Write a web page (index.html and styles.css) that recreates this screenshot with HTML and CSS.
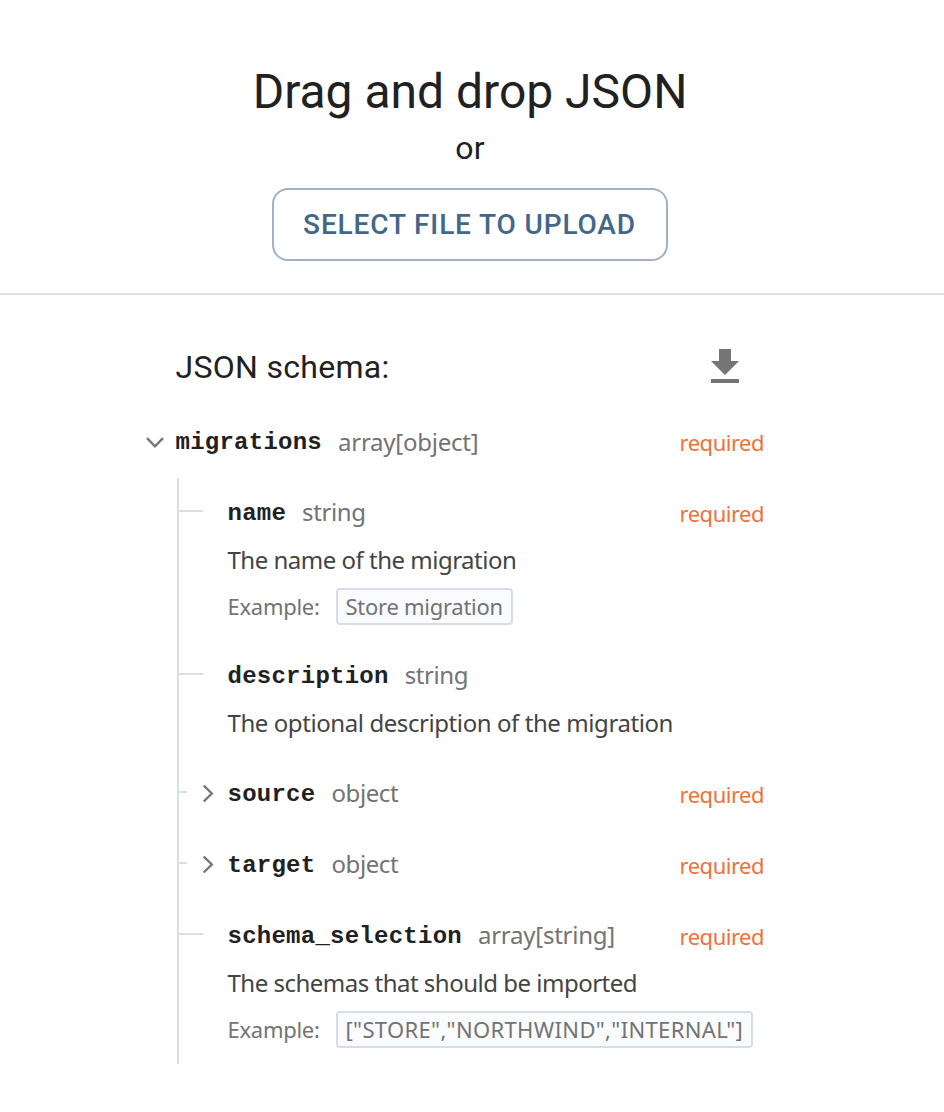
FILE: index.html
```
<!DOCTYPE html>
<html lang="en">
<head>
<meta charset="utf-8">
<title>JSON upload</title>
<link rel="stylesheet" href="styles.css">
</head>
<body>
<section class="upload">
  <h1 class="title">Drag and drop JSON</h1>
  <p class="or">or</p>
  <button class="select">SELECT FILE TO UPLOAD</button>
</section>
<main class="schema">
  <header class="schema-head">
    <h2 class="schema-title">JSON schema:</h2>
    <svg class="download" width="28" height="34" viewBox="0 0 28 34"><path d="M28 12h-8V0H8v12H0l14 14zM0 30v4h28v-4z"/></svg>
  </header>
  <div class="row root">
    <svg class="chevron" width="20" height="20" viewBox="0 0 20 20"><path d="M2 6.200 10 14.300l8-8.100"/></svg>
    <span class="key">migrations</span><span class="type array">array[object]</span><span class="required">required</span>
  </div>
  <div class="tree">
    <div class="field">
      <div class="row"><span class="key">name</span><span class="type">string</span><span class="required">required</span></div>
      <p class="desc name">The name of the migration</p>
      <div class="example"><span class="label">Example:</span><code class="value">Store migration</code></div>
    </div>
    <div class="field">
      <div class="row"><span class="key">description</span><span class="type">string</span></div>
      <p class="desc">The optional description of the migration</p>
    </div>
    <div class="field expandable">
      <div class="row"><svg class="chevron" width="20" height="20" viewBox="0 0 20 20"><path d="M5.700 1.500 13.800 9.500l-8.100 8"/></svg><span class="key">source</span><span class="type">object</span><span class="required">required</span></div>
    </div>
    <div class="field expandable">
      <div class="row"><svg class="chevron" width="20" height="20" viewBox="0 0 20 20"><path d="M5.700 1.500 13.800 9.500l-8.100 8"/></svg><span class="key">target</span><span class="type">object</span><span class="required">required</span></div>
    </div>
    <div class="field">
      <div class="row"><span class="key">schema_selection</span><span class="type array">array[string]</span><span class="required">required</span></div>
      <p class="desc schemas">The schemas that should be imported</p>
      <div class="example"><span class="label">Example:</span><code class="value list">["STORE","NORTHWIND","INTERNAL"]</code></div>
    </div>
  </div>
</main>
</body>
</html>
```
FILE: styles.css
```
* { box-sizing: border-box; }
body { margin: 0; background: #fff; color: #212121; font-family: Roboto, sans-serif; }
h1, h2, p { margin: 0; font-weight: 400; }
.upload { height: 295px; padding: 64px 4px 0 0; border-bottom: 2px solid #e0e0e0; display: flex; flex-direction: column; align-items: center; }
.title { font-size: 48px; line-height: 56px; }
.or { font-size: 32px; line-height: 48px; margin-top: 4px; letter-spacing: .3px; }
.select { margin-top: 16px; width: 396px; height: 73px; padding: 0 1px 0 0; border: 2px solid #9fb2c7; border-radius: 16px; background: #fff; color: #43678b; font: 500 28px/49px Roboto, sans-serif; letter-spacing: .86px; }
.schema { margin-left: 145px; width: 619px; font-family: "Noto Sans", sans-serif; }
.schema-head { display: flex; justify-content: space-between; align-items: center; height: 112px; padding: 0 25px 0 30.5px; margin-top: 16px; }
.schema-title { font: 400 32px/48px Roboto, sans-serif; letter-spacing: .3px; }
.download { fill: #757575; display: block; margin-top: -2px; }
.row { display: flex; align-items: center; height: 71px; padding-bottom: 2px; white-space: nowrap; line-height: 38px; }
.root { height: 55px; padding-bottom: 17px; }
.root .key { margin-left: 10.5px; padding-top: 1px; }
.chevron { flex: none; fill: none; stroke: #757575; stroke-width: 2.4; }
.root .chevron { margin-top: 0; }
.key { font: 700 24px/38px "Liberation Mono", monospace; letter-spacing: .25px; padding-top: 2px; }
.type { margin-left: 16px; padding-bottom: 1px; font-size: 24px; color: #737373; letter-spacing: -.4px; }
.array { letter-spacing: -.24px; }
.required { margin-left: auto; font-size: 22px; color: #f27036; letter-spacing: -.5px; }
.tree { margin-left: 32px; border-left: 2px solid #d9deeb; }
.field { display: grid; grid-template-columns: 24px 1fr; column-gap: 24.5px; }
.field::before { content: ""; grid-column: 1; grid-row: 1 / span 3; height: 2px; margin-top: 32px; background: #d9deeb; }
.field > * { grid-column: 2; }
.expandable { grid-template-columns: 8px 1fr; column-gap: 10.5px; }
.expandable .key { margin-left: 10px; }
.desc { font-size: 24px; line-height: 38px; height: 47px; margin-top: -8px; margin-bottom: 8px; color: #444; letter-spacing: -.42px; }
.desc.name, .desc.schemas { letter-spacing: -.5px; }
.example { display: flex; align-items: center; height: 37px; margin: -8px 0 16px; font-size: 22px; color: #737373; letter-spacing: -.27px; }
.label { padding-bottom: 2px; width: 92.5px; white-space: nowrap; }
.value { margin-left: 16px; height: 37px; padding: 0 8px 0 7.500px; border: 2px solid #d6ddea; border-radius: 4px; background: #fafbfd; font: inherit; line-height: 32px; }
.value.list { letter-spacing: .34px; }
```
